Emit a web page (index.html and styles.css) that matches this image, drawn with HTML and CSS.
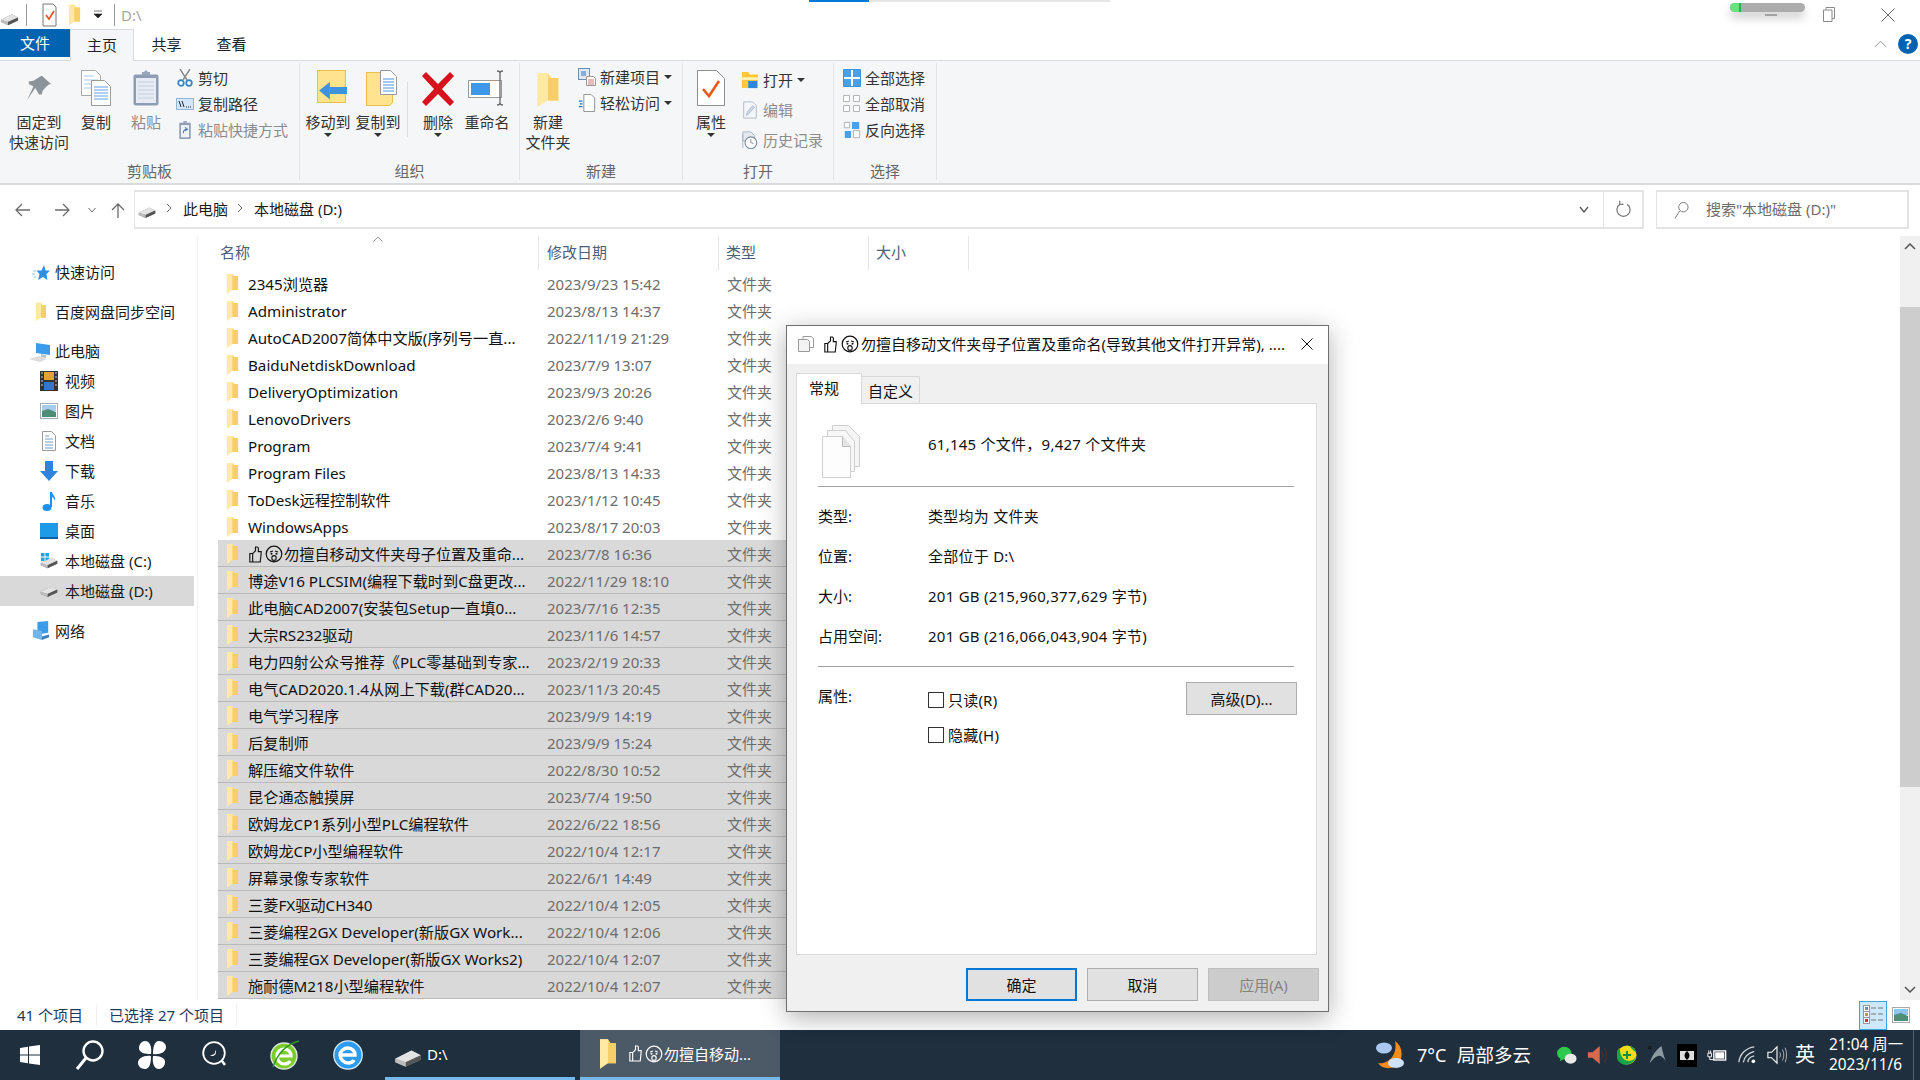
FILE: index.html
```html
<!DOCTYPE html>
<html lang="zh-CN">
<head>
<meta charset="utf-8">
<title>D:\</title>
<link rel="stylesheet" href="styles.css">
</head>
<body>
<svg class="defs" width="0" height="0">
  <defs>
    <symbol id="folder" viewBox="0 0 14 24">
      <path d="M1 1h6l2 3h4v15H5l-4 4z" fill="#fbd977"/>
      <path d="M1 1l6 0 0 18-6 4z" fill="#ffe9a3"/>
      <path d="M7 4h6v15H7z" fill="#f7cf68"/>
    </symbol>
    <symbol id="drive" viewBox="0 0 24 18">
      <path d="M1 10l14-7 8 4v4l-13 6-9-4z" fill="#8b8b8b"/>
      <path d="M1 10l14-7 8 4-13 6z" fill="#e3e3e3"/>
      <path d="M10 13l13-6v4l-13 6z" fill="#555"/>
      <path d="M1 10l9 3v4l-9-4z" fill="#bdbdbd"/>
    </symbol>
    <symbol id="thumb" viewBox="0 0 14 18">
      <path d="M1 8h3v9H1zM4 8l3-3V1h2l1 1v4h3l0 2-1 9H4" fill="none" stroke="currentColor" stroke-width="1.2"/>
    </symbol>
    <symbol id="face" viewBox="0 0 18 18">
      <circle cx="9" cy="9" r="7.8" fill="none" stroke="currentColor" stroke-width="1.2"/>
      <path d="M5 7l3-1M10 6l3 1" stroke="currentColor" stroke-width="1.1" fill="none"/>
      <circle cx="6.5" cy="8.8" r="1" fill="currentColor"/><circle cx="11.5" cy="8.8" r="1" fill="currentColor"/>
      <ellipse cx="9" cy="13" rx="2.2" ry="2.4" fill="none" stroke="currentColor" stroke-width="1.1"/>
    </symbol>
  </defs>
</svg>

<div class="window">
  <header class="titlebar">
    <svg class="qa-drive" viewBox="0 0 24 18"><use href="#drive"/></svg>
    <i class="qa-sep"></i>
    <svg class="qa-check" viewBox="0 0 15 24"><path d="M1 1h10l3 3v19H1z" fill="#fff" stroke="#777"/><path d="M4 12l3 4 5-8" fill="none" stroke="#e8501f" stroke-width="1.6"/></svg>
    <svg class="qa-folder" viewBox="0 0 14 24"><use href="#folder"/></svg>
    <svg class="qa-drop" viewBox="0 0 8 9"><path d="M0 1h8M0 4h8l-4 4z" fill="#222" stroke="#222" stroke-width=".6"/></svg>
    <i class="qa-sep qa-sep2"></i>
    <span class="qa-path">D:\</span>
    <div class="progress"><i></i></div>
    <div class="winbtns">
      <svg class="wb-min" viewBox="0 0 12 2"><path d="M0 1h12" stroke="#777"/></svg>
      <svg class="wb-max" viewBox="0 0 12 15"><path d="M3 2.5V.5h8.500v11H9M.5 3h8.500v11.500H.5z" fill="#fff" stroke="#888"/></svg>
      <svg class="wb-close" viewBox="0 0 14 14"><path d="M.5.5l13 13M13.500.5l-13 13" stroke="#666"/></svg>
    </div>
  </header>

  <nav class="tabs">
    <span class="tab-file">文件</span>
    <span class="tab tab-on">主页</span>
    <span class="tab">共享</span>
    <span class="tab">查看</span>
    <svg class="rib-caret" viewBox="0 0 14 8"><path d="M1 7l6-6 6 6" fill="none" stroke="#888"/></svg>
    <span class="help">?</span>
  </nav>

  <section class="ribbon">
    <div class="group g1">
      <div class="gbody">
        <div class="big b78">
          <div class="bigicon"><svg class="pin" width="26" height="26" viewBox="0 0 28 32" preserveAspectRatio="none"><path d="M17 1l10 10-3 1-6 7-1 5-3 0-4-8-9 15 7-17-5-3 0-3 5-1 7-5z" fill="#8d9499"/></svg></div>
          <span>固定到<br>快速访问</span>
        </div>
        <div class="big b36">
          <div class="bigicon"><svg width="30" height="36" viewBox="0 0 30 36"><path d="M.5.500h14l5 5v20H.5z" fill="#fff" stroke="#a9a9a9"/><path d="M3 6h10M3 10h14M3 14h14M3 18h14" stroke="#a9c8ec"/><path d="M10.500 10.500h13l6 6v19h-19z" fill="#fff" stroke="#9b9b9b"/><path d="M13 17h14M13 20h14M13 23h14M13 26h14M13 29h14" stroke="#5aa0e6"/></svg></div>
          <span>复制</span>
        </div>
        <div class="big b64 dim">
          <div class="bigicon"><svg width="26" height="36" viewBox="0 0 26 36"><rect x=".5" y="4.500" width="25" height="31" rx="2" fill="#8e9cb4"/><rect x="3" y="8" width="20" height="25" fill="#e6ebf4"/><path d="M5 12h16M5 16h16M5 20h16M5 24h16M5 28h16" stroke="#c5cedd"/><path d="M9 5V2h2l2-2 2 2h2v3z" fill="#9aa6bb"/></svg></div>
          <span>粘贴</span>
        </div>
        <div class="smalls s-a">
          <div class="small"><svg class="si" viewBox="0 0 16 18"><path d="M3 0l7 11M13 0L6 11" stroke="#8b8b8b" stroke-width="1.500"/><circle cx="4" cy="14" r="2.800" fill="none" stroke="#2f86c9" stroke-width="1.700"/><circle cx="12" cy="14" r="2.800" fill="none" stroke="#2f86c9" stroke-width="1.700"/></svg><span>剪切</span></div>
          <div class="small"><svg class="si" viewBox="0 0 18 14"><rect x=".5" y="1.500" width="17" height="11" fill="#d4e7f8" stroke="#8fb7dc"/><path d="M3 4l2 6M6 4l2 6" stroke="#223"/><path d="M10 10h1M12 10h1M14 10h1" stroke="#223"/></svg><span>复制路径</span></div>
          <div class="small dim"><svg class="si" viewBox="0 0 16 22"><rect x="1" y="2" width="14" height="20" rx="1" fill="#8e9cb4"/><rect x="3" y="5" width="10" height="15" fill="#eef1f6"/><path d="M6 0h4v3H6z" fill="#9aa6bb"/><path d="M6 15c0-4 2-5 4-5M8 8l3 2-3 2" fill="none" stroke="#4c7fb5" stroke-width="1.300"/></svg><span>粘贴快捷方式</span></div>
        </div>
      </div>
      <div class="glabel">剪贴板</div>
    </div>

    <div class="group g2">
      <div class="gbody">
        <div class="big b56">
          <div class="bigicon"><svg class="nudge" width="30" height="38" viewBox="0 0 28 38" preserveAspectRatio="none"><path d="M.5.500h26v32h-26z" fill="#ffe38f" stroke="#e8c14c"/><path d="M12 24V12l-10 8.500 10 9V24z" fill="#3d93dc"/><path d="M12 17h16v7H12z" fill="#3d93dc"/></svg></div>
          <span>移动到</span><i class="caret"></i>
        </div>
        <div class="big b44">
          <div class="bigicon"><svg class="nudge" width="32" height="38" viewBox="0 0 32 38"><path d="M.5 2.500h26v30l-3 3H.5z" fill="#ffe38f" stroke="#e8c14c"/><path d="M14.500.500h10l6 6v18h-16z" fill="#fff" stroke="#999"/><path d="M17 9h11M17 12h11M17 15h11M17 18h11M17 21h11" stroke="#4a94e0"/></svg></div>
          <span>复制到</span><i class="caret"></i>
        </div>
        <i class="vsep"></i>
        <div class="big b44 m-del">
          <div class="bigicon"><svg class="del" width="32" height="34" viewBox="0 0 32 34"><path d="M4 0l12 12L28 0l4 4-12 13 12 13-4 4-12-12L4 34l-4-4 12-13L0 4z" fill="#d8121c"/></svg></div>
          <span>删除</span><i class="caret"></i>
        </div>
        <div class="big b50">
          <div class="bigicon"><svg width="38" height="36" viewBox="0 0 38 36"><rect x=".5" y="10.500" width="33" height="17" fill="#fff" stroke="#9a9a9a"/><rect x="3" y="13" width="19" height="12" fill="#3c99ea"/><path d="M29 1c2 0 3 1 3 2v30c0 1-1 2-3 2M35 1c-2 0-3 1-3 2v30c0 1 1 2 3 2" fill="none" stroke="#666" stroke-width="1.300"/></svg></div>
          <span>重命名</span>
        </div>
      </div>
      <div class="glabel">组织</div>
    </div>

    <div class="group g3">
      <div class="gbody">
        <div class="big b56">
          <div class="bigicon"><svg class="del" width="24" height="36" viewBox="0 0 14 24" preserveAspectRatio="none"><use href="#folder"/></svg></div>
          <span>新建<br>文件夹</span>
        </div>
        <div class="smalls s-b">
          <div class="small"><svg class="si" viewBox="0 0 18 18"><rect x=".5" y=".5" width="11" height="11" fill="#dfe9f5" stroke="#6a8fb5"/><rect x="3" y="3" width="5" height="5" fill="#7fb0e0"/><path d="M8.500 8.500h7l2 2v7h-9z" fill="#fff" stroke="#999"/><path d="M10 12h6M10 14h6M10 16h6" stroke="#c77"/></svg><span>新建项目</span><i class="caret inl"></i></div>
          <div class="small"><svg class="si" viewBox="0 0 18 20"><path d="M5.500.5h8l4 4v15h-12z" fill="#fff" stroke="#888"/><path d="M0 8h4M1 11h3M0 14h4" stroke="#2474c2" stroke-width="1.300"/></svg><span>轻松访问</span><i class="caret inl"></i></div>
        </div>
      </div>
      <div class="glabel">新建</div>
    </div>

    <div class="group g4">
      <div class="gbody">
        <div class="big b56">
          <div class="bigicon"><svg width="28" height="36" viewBox="0 0 28 36"><path d="M.5.500h19l8 8v27H.5z" fill="#fff" stroke="#8f8f8f"/><path d="M6 19l6 7 10-15" fill="none" stroke="#e85a1c" stroke-width="2.600"/></svg></div>
          <span>属性</span><i class="caret"></i>
        </div>
        <div class="smalls s-c">
          <div class="small"><svg class="si" viewBox="0 0 18 20"><path d="M0 1h7l2 3h9v15H0z" fill="#ffc83d"/><path d="M0 7h18v3H0z" fill="#fff2b8"/><path d="M7 11h10v8H7z" fill="#2d89d8"/></svg><span>打开</span><i class="caret inl"></i></div>
          <div class="small dim"><svg class="si" viewBox="0 0 16 20"><path d="M1 1h10l4 4v14H1z" fill="#f3f6fa" stroke="#aeb8c4"/><path d="M4 16l1-4 6-7 2 2-6 7z" fill="#c8d4e2" stroke="#9fb0c4" stroke-width=".7"/></svg><span>编辑</span></div>
          <div class="small dim"><svg class="si" viewBox="0 0 18 20"><path d="M1 1h9l4 4v6H1z" fill="#e5e9f0" stroke="#a8b2c0"/><path d="M1 4v15" stroke="#a8b2c0"/><circle cx="10" cy="13" r="6.500" fill="#fff" stroke="#7f8da0" stroke-width="1.300"/><path d="M10 9v4l3 1" fill="none" stroke="#7f8da0"/></svg><span>历史记录</span></div>
        </div>
      </div>
      <div class="glabel">打开</div>
    </div>

    <div class="group g5">
      <div class="gbody">
        <div class="smalls s-d">
          <div class="small"><svg class="si" viewBox="0 0 18 18"><path d="M.5.500h17v17H.500z" fill="#fff" stroke="#3d93dc"/><path d="M1 1h7v7H1zM10 1h7v7h-7zM1 10h7v7H1zM10 10h7v7h-7z" fill="#4aa0e6"/></svg><span>全部选择</span></div>
          <div class="small"><svg class="si" viewBox="0 0 18 18"><path d="M.5.500h6v6h-6zM10.500.500h6v6h-6zM.5 10.500h6v6h-6zM10.500 10.500h6v6h-6z" fill="#fff" stroke="#b5b5b5"/></svg><span>全部取消</span></div>
          <div class="small"><svg class="si" viewBox="0 0 18 20"><path d="M.5 1.500h6v6h-6zM10.500 10.500h7v8h-7z" fill="#fff" stroke="#aaa"/><path d="M9 1h8v8H9zM1 11h7v8H1z" fill="#4aa0e6"/></svg><span>反向选择</span></div>
        </div>
      </div>
      <div class="glabel">选择</div>
    </div>
    <div class="ribfill"></div>
  </section>

  <section class="addrbar">
    <div class="navbtns">
      <svg class="nb-a" viewBox="0 0 16 14"><path d="M15 7H2M7 1L1 7l6 6" fill="none" stroke="#6b6b6b" stroke-width="1.300"/></svg>
      <svg class="nb-b" viewBox="0 0 16 14"><path d="M1 7h13M9 1l6 6-6 6" fill="none" stroke="#6b6b6b" stroke-width="1.300"/></svg>
      <svg class="nb-c" viewBox="0 0 8 6"><path d="M.5 1L4 5l3.500-4" fill="none" stroke="#6b6b6b"/></svg>
      <svg class="nb-d" viewBox="0 0 14 16"><path d="M7 16V2M1 8l6-6 6 6" fill="none" stroke="#6b6b6b" stroke-width="1.300"/></svg>
    </div>
    <div class="addr">
      <svg class="addr-drive" viewBox="0 0 24 18"><use href="#drive"/></svg>
      <svg class="chev" viewBox="0 0 6 10"><path d="M1 1l4 4-4 4" fill="none" stroke="#777"/></svg>
      <span class="crumb">此电脑</span>
      <svg class="chev chev2" viewBox="0 0 6 10"><path d="M1 1l4 4-4 4" fill="none" stroke="#777"/></svg>
      <span class="crumb">本地磁盘 (D:)</span>
      <svg class="addr-down" viewBox="0 0 10 7"><path d="M1 1l4 5 4-5" fill="none" stroke="#555" stroke-width="1.300"/></svg>
      <div class="refresh"><svg viewBox="0 0 16 20" width="15" height="20"><path d="M4 4a7 7 0 1 0 8 0M4 4V0M4 4h4" fill="none" stroke="#777" stroke-width="1.300"/></svg></div>
    </div>
    <div class="search">
      <svg viewBox="0 0 16 20" width="15" height="20"><circle cx="10" cy="7" r="5" fill="none" stroke="#777"/><path d="M6 11l-5 8" stroke="#777"/></svg>
      <span>搜索"本地磁盘 (D:)"</span>
    </div>
  </section>

  <main class="main">
    <aside class="navpane">
      <div class="ni"><svg class="ni-ic" viewBox="0 0 18 20"><path d="M12 3l1.500 5.500H18l-3.500 3.500 1 6-4.500-3-5 3 1.500-6-3-3.500h5z" fill="#2f8fe5"/><path d="M1 9h3M0 12h3M2 15h2" stroke="#8cc1f0"/></svg><span>快速访问</span></div>
      <div class="ni gap"><svg class="ni-ic" viewBox="0 0 14 24"><use href="#folder"/></svg><span>百度网盘同步空间</span></div>
      <div class="ni gap h29"><svg class="ni-ic ic-pc" viewBox="0 0 22 20"><path d="M7 1l14 2v10L7 11z" fill="#3c9be8"/><path d="M12 12l5 1v3l-5-1z" fill="#b9c3cc"/><path d="M0 17l10-3 8 3-7 3z" fill="#dcdcdc"/></svg><span>此电脑</span></div>
      <div class="ni l2"><svg class="ni-ic" viewBox="0 0 18 20"><rect width="18" height="20" fill="#333"/><rect x="4" y="1" width="10" height="8" fill="#e3a332"/><rect x="4" y="11" width="10" height="8" fill="#3377cc"/><path d="M1 2h2M1 6h2M1 10h2M1 14h2M15 2h2M15 6h2M15 10h2M15 14h2" stroke="#ccc"/></svg><span>视频</span></div>
      <div class="ni l2"><svg class="ni-ic" viewBox="0 0 18 18"><rect x=".5" y="1.500" width="17" height="15" fill="#fff" stroke="#a6adb8"/><rect x="2" y="3" width="14" height="6" fill="#a6cdea"/><path d="M2 9l6-2 8 3v5H2z" fill="#4e8e76"/></svg><span>图片</span></div>
      <div class="ni l2"><svg class="ni-ic" viewBox="0 0 16 20"><path d="M1.500.500h9l4 4v15h-13z" fill="#fff" stroke="#9a9a9a"/><path d="M4 5h4M4 8h8M4 11h8M4 14h8M4 17h8" stroke="#6e9cc9"/></svg><span>文档</span></div>
      <div class="ni l2"><svg class="ni-ic" viewBox="0 0 18 20"><path d="M5 0h8v10h5l-9 10-9-10h5z" fill="#2f83de"/></svg><span>下载</span></div>
      <div class="ni l2"><svg class="ni-ic" viewBox="0 0 14 20"><ellipse cx="5" cy="16.500" rx="4.500" ry="3.500" fill="#1f8ff0"/><path d="M8 1h2c1 4 4 4 3 9-1-3-2-4-3-4v10H8z" fill="#1f8ff0"/></svg><span>音乐</span></div>
      <div class="ni l2"><svg class="ni-ic" viewBox="0 0 18 16"><rect width="18" height="14" fill="#1e9be6"/><rect y="14" width="18" height="2" fill="#0d5fa8"/></svg><span>桌面</span></div>
      <div class="ni l2"><svg class="ni-ic" viewBox="0 0 20 20"><path d="M1 1h4v4H1zM6 1h4v4H6zM1 6h4v4H1zM6 6h4v4H6z" fill="#1aa3e8"/><use href="#drive" x="0" y="4" width="20" height="15"/></svg><span>本地磁盘 (C:)</span></div>
      <div class="ni l2 on"><svg class="ni-ic" viewBox="0 0 24 18"><use href="#drive"/></svg><span>本地磁盘 (D:)</span></div>
      <div class="ni gap"><svg class="ni-ic" viewBox="0 0 20 22"><path d="M6 1l12-1v13L6 15z" fill="#3c9be8"/><path d="M1 9l10 2v10L1 18z" fill="#6fb4ea"/><path d="M11 17l8-2v3l-8 3z" fill="#3f7fb8"/></svg><span>网络</span></div>
    </aside>

    <section class="files">
      <div class="thead">
        <span class="th th-n">名称</span><span class="th th-d">修改日期</span><span class="th th-t">类型</span><span class="th th-s">大小</span>
        <svg class="sortcaret" viewBox="0 0 10 6"><path d="M.5 5.500L5 1l4.500 4.500" fill="none" stroke="#999"/></svg>
      </div>
      <div class="rows">
        <div class="row"><span class="n"><svg class="fi"><use href="#folder"/></svg>2345浏览器</span><span class="d">2023/9/23 15:42</span><span class="d">文件夹</span></div>
        <div class="row"><span class="n"><svg class="fi"><use href="#folder"/></svg>Administrator</span><span class="d">2023/8/13 14:37</span><span class="d">文件夹</span></div>
        <div class="row"><span class="n"><svg class="fi"><use href="#folder"/></svg>AutoCAD2007简体中文版(序列号一直...</span><span class="d">2022/11/19 21:29</span><span class="d">文件夹</span></div>
        <div class="row"><span class="n"><svg class="fi"><use href="#folder"/></svg>BaiduNetdiskDownload</span><span class="d">2023/7/9 13:07</span><span class="d">文件夹</span></div>
        <div class="row"><span class="n"><svg class="fi"><use href="#folder"/></svg>DeliveryOptimization</span><span class="d">2023/9/3 20:26</span><span class="d">文件夹</span></div>
        <div class="row"><span class="n"><svg class="fi"><use href="#folder"/></svg>LenovoDrivers</span><span class="d">2023/2/6 9:40</span><span class="d">文件夹</span></div>
        <div class="row"><span class="n"><svg class="fi"><use href="#folder"/></svg>Program</span><span class="d">2023/7/4 9:41</span><span class="d">文件夹</span></div>
        <div class="row"><span class="n"><svg class="fi"><use href="#folder"/></svg>Program Files</span><span class="d">2023/8/13 14:33</span><span class="d">文件夹</span></div>
        <div class="row"><span class="n"><svg class="fi"><use href="#folder"/></svg>ToDesk远程控制软件</span><span class="d">2023/1/12 10:45</span><span class="d">文件夹</span></div>
        <div class="row"><span class="n"><svg class="fi"><use href="#folder"/></svg>WindowsApps</span><span class="d">2023/8/17 20:03</span><span class="d">文件夹</span></div>
        <div class="row sel"><span class="n"><svg class="fi"><use href="#folder"/></svg><svg class="em1"><use href="#thumb"/></svg><svg class="em2"><use href="#face"/></svg>勿擅自移动文件夹母子位置及重命...</span><span class="d">2023/7/8 16:36</span><span class="d">文件夹</span></div>
        <div class="row sel"><span class="n"><svg class="fi"><use href="#folder"/></svg>博途V16 PLCSIM(编程下载时到C盘更改...</span><span class="d">2022/11/29 18:10</span><span class="d">文件夹</span></div>
        <div class="row sel"><span class="n"><svg class="fi"><use href="#folder"/></svg>此电脑CAD2007(安装包Setup一直填0...</span><span class="d">2023/7/16 12:35</span><span class="d">文件夹</span></div>
        <div class="row sel"><span class="n"><svg class="fi"><use href="#folder"/></svg>大宗RS232驱动</span><span class="d">2023/11/6 14:57</span><span class="d">文件夹</span></div>
        <div class="row sel"><span class="n"><svg class="fi"><use href="#folder"/></svg>电力四射公众号推荐《PLC零基础到专家...</span><span class="d">2023/2/19 20:33</span><span class="d">文件夹</span></div>
        <div class="row sel"><span class="n"><svg class="fi"><use href="#folder"/></svg>电气CAD2020.1.4从网上下载(群CAD20...</span><span class="d">2023/11/3 20:45</span><span class="d">文件夹</span></div>
        <div class="row sel"><span class="n"><svg class="fi"><use href="#folder"/></svg>电气学习程序</span><span class="d">2023/9/9 14:19</span><span class="d">文件夹</span></div>
        <div class="row sel"><span class="n"><svg class="fi"><use href="#folder"/></svg>后复制师</span><span class="d">2023/9/9 15:24</span><span class="d">文件夹</span></div>
        <div class="row sel"><span class="n"><svg class="fi"><use href="#folder"/></svg>解压缩文件软件</span><span class="d">2022/8/30 10:52</span><span class="d">文件夹</span></div>
        <div class="row sel"><span class="n"><svg class="fi"><use href="#folder"/></svg>昆仑通态触摸屏</span><span class="d">2023/7/4 19:50</span><span class="d">文件夹</span></div>
        <div class="row sel"><span class="n"><svg class="fi"><use href="#folder"/></svg>欧姆龙CP1系列小型PLC编程软件</span><span class="d">2022/6/22 18:56</span><span class="d">文件夹</span></div>
        <div class="row sel"><span class="n"><svg class="fi"><use href="#folder"/></svg>欧姆龙CP小型编程软件</span><span class="d">2022/10/4 12:17</span><span class="d">文件夹</span></div>
        <div class="row sel"><span class="n"><svg class="fi"><use href="#folder"/></svg>屏幕录像专家软件</span><span class="d">2022/6/1 14:49</span><span class="d">文件夹</span></div>
        <div class="row sel"><span class="n"><svg class="fi"><use href="#folder"/></svg>三菱FX驱动CH340</span><span class="d">2022/10/4 12:05</span><span class="d">文件夹</span></div>
        <div class="row sel"><span class="n"><svg class="fi"><use href="#folder"/></svg>三菱编程2GX Developer(新版GX Work...</span><span class="d">2022/10/4 12:06</span><span class="d">文件夹</span></div>
        <div class="row sel"><span class="n"><svg class="fi"><use href="#folder"/></svg>三菱编程GX Developer(新版GX Works2)</span><span class="d">2022/10/4 12:07</span><span class="d">文件夹</span></div>
        <div class="row sel"><span class="n"><svg class="fi"><use href="#folder"/></svg>施耐德M218小型编程软件</span><span class="d">2022/10/4 12:07</span><span class="d">文件夹</span></div>
      </div>
    </section>

    <div class="scrollbar">
      <svg class="sb-arrow" viewBox="0 0 12 7"><path d="M1 6l5-5 5 5" fill="none" stroke="#555" stroke-width="1.500"/></svg>
      <div class="sb-track"><div class="sb-thumb"></div></div>
      <svg class="sb-arrow" viewBox="0 0 12 7"><path d="M1 1l5 5 5-5" fill="none" stroke="#555" stroke-width="1.500"/></svg>
    </div>
  </main>

  <footer class="status">
    <span class="st st1">41 个项目</span>
    <span class="st st2">已选择 27 个项目</span>
    <div class="views">
      <div class="view on"><svg width="20" height="20" viewBox="0 0 20 20"><rect x=".5" y=".5" width="6" height="6" fill="#fff" stroke="#999"/><rect x=".5" y="6.500" width="6" height="6" fill="#fff" stroke="#999"/><rect x=".5" y="12.500" width="6" height="6" fill="#fff" stroke="#999"/><rect x="2" y="2" width="3" height="3" fill="#6a8fb5"/><rect x="2" y="8" width="3" height="3" fill="#c09a2c"/><rect x="2" y="14" width="3" height="3" fill="#c33"/><path d="M8 3h5M15 3h5M8 9h5M15 9h5M8 15h5M15 15h5" stroke="#777"/></svg></div>
      <div class="view"><svg width="18" height="16" viewBox="0 0 18 16"><rect x=".5" y=".5" width="17" height="15" fill="#fff" stroke="#aaa"/><rect x="2" y="2" width="14" height="6" fill="#8fc4ee"/><path d="M2 8l7-2 7 3v5H2z" fill="#4e8e76"/></svg></div>
    </div>
  </footer>
</div>

<footer class="taskbar">
  <div class="tslot"><svg width="20" height="20" viewBox="0 0 20 20"><path d="M0 3l8-1.200v7.700H0zM9 1.600L20 0v9.500H9zM0 10.500h8v7.700L0 17zM9 10.500h11V20L9 18.400z" fill="#fff"/></svg></div>
  <div class="tslot"><svg width="30" height="32" viewBox="0 0 30 32"><circle cx="18" cy="12" r="9.500" fill="none" stroke="#fff" stroke-width="2.400"/><path d="M11 19L2 30" stroke="#fff" stroke-width="3"/></svg></div>
  <div class="tslot"><svg width="28" height="28" viewBox="0 0 28 28"><g fill="#fff"><path id="petal" d="M13 13C7 13 1 12 1 7c0-4 3-7 6-7 5 0 7 6 6 13z"/><path d="M15 13c0-6 1-13 6-13 4 0 7 3 7 6 0 5-6 8-13 7z"/><path d="M15 15c6 0 12 1 12 6 0 4-3 7-6 7-5 0-7-6-6-13z"/><path d="M13 15c0 6-1 13-6 13-4 0-7-3-7-6 0-5 6-8 13-7z"/></g></svg></div>
  <div class="tslot"><svg width="26" height="28" viewBox="0 0 26 28"><circle cx="12" cy="12" r="10.800" fill="none" stroke="#fff" stroke-width="1.800"/><path d="M8 14c2 2 6 1 6-3 0-1-.5-2-1-2 1 3-1 5-5 5z" fill="#fff"/><path d="M20 20l3 4" stroke="#fff" stroke-width="2.500"/></svg></div>
  <div class="tslot"><svg width="30" height="34" viewBox="0 0 30 34"><circle cx="14" cy="18" r="13" fill="#7ccc2c" stroke="#dfe8d8" stroke-width="1.400"/><path d="M7 18h14c0-4-3-7-7-7s-7 3-7 7 3 8 7 8c3 0 5-1 6-3" fill="none" stroke="#fff" stroke-width="3.200"/><path d="M3 29C8 14 18 6 29 3" fill="none" stroke="#2f9a22" stroke-width="1.400"/></svg></div>
  <div class="tslot"><svg width="30" height="30" viewBox="0 0 30 30"><circle cx="15" cy="15" r="14.200" fill="#2d9bf0" stroke="#d9edfb" stroke-width="1.300"/><path d="M7 15h15c0-4-3-7-7-7s-8 3-8 7 4 8 8 8c3 0 5-1 6-3" fill="none" stroke="#fff" stroke-width="3.400"/></svg></div>
  <div class="tapp tapp-d"><svg class="tapp-drive" viewBox="0 0 24 18"><use href="#drive"/></svg><span class="tapp-dt">D:\</span></div>
  <div class="tapp tapp-on"><svg class="tapp-folder" viewBox="0 0 14 24"><use href="#folder"/></svg><svg class="em1 w"><use href="#thumb"/></svg><svg class="em2 w"><use href="#face"/></svg><span>勿擅自移动...</span></div>
  <div class="tray">
    <svg class="wx" viewBox="0 0 30 32"><path d="M20 2c8 5 9 18 2 24-6 5-15 4-19-2 10 2 20-8 17-22z" fill="#f28c1c"/><ellipse cx="9" cy="9" rx="8" ry="5.500" fill="#a9c8ef"/><ellipse cx="21" cy="24" rx="8" ry="5" fill="#cfe0f7"/></svg>
    <span class="wtemp">7°C</span>
    <span class="wtext">局部多云</span>
    <div class="ticons">
      <svg viewBox="0 0 22 22"><ellipse cx="8" cy="9" rx="8" ry="7" fill="#2dc84d"/><path d="M4 14l-1 4 5-3z" fill="#2dc84d"/><ellipse cx="15" cy="15" rx="6.500" ry="5.500" fill="#e8e8e8"/></svg>
      <svg viewBox="0 0 22 22"><path d="M1 8h5l8-7v20l-8-7H1z" fill="#d9694b"/><path d="M16 6c2 3 2 7 0 10M19 3c3 5 3 11 0 16" fill="none" stroke="#5b2f2a"/></svg>
      <svg viewBox="0 0 22 22"><circle cx="11" cy="11" r="10.500" fill="#f5dc1a"/><path d="M3 3a10.500 10.500 0 0 0 8 18.500 10.500 10.500 0 0 0 10-9C19 18 12 19 7 15 4 12 3 7 3 3zM14 1a10.500 10.500 0 0 1 7 7C18 6 16 4 14 1z" fill="#17a34a"/><path d="M11 6.500v9M6.500 11h9" stroke="#0c8a3e" stroke-width="2"/></svg>
      <svg viewBox="0 0 22 22"><path d="M3 20C5 12 10 5 16 1c1 6 3 13 5 17-3-5-7-7-9-6-3 1-6 4-9 8z" fill="#8a9aa0"/><path d="M1 1l4 4M5 1L1 5" stroke="#111"/></svg>
      <svg class="dolby" viewBox="0 0 20 23"><rect width="20" height="23" fill="#000"/><path d="M3 7h5a4.500 4.500 0 0 1 0 9H3zM17 7h-5a4.500 4.500 0 0 0 0 9h5z" fill="#ddd"/></svg>
      <svg viewBox="0 0 22 22"><rect x="7.500" y="6.500" width="13" height="10" fill="none" stroke="#fff" stroke-width="1.500"/><rect x="9" y="8" width="10" height="7" fill="#fff"/><path d="M1 9h4v4H1zM2 6v3M4 6v3M3 13v3h5" stroke="#fff" fill="none"/></svg>
      <svg class="wifi" viewBox="0 0 22 22"><path d="M2 19C3 10 10 3 19 2M7 19c1-6 5-10 12-12M12 19c0-3 2-6 7-7" fill="none" stroke="#cfd4d9" stroke-width="1.400"/><circle cx="18" cy="18" r="2" fill="#fff"/></svg>
      <svg viewBox="0 0 22 22"><path d="M1 8h4l6-6v18l-6-6H1z" fill="none" stroke="#fff" stroke-width="1.200"/><path d="M14 8c1 2 1 4 0 6M17 5c2 4 2 8 0 12M20 3c2 5 2 11 0 16" fill="none" stroke="#bbb"/></svg>
    </div>
    <span class="ime">英</span>
    <div class="clock"><span>21:04 周一</span><span>2023/11/6</span></div>
    <i class="showdesk"></i>
  </div>
</footer>

<div class="pill"><i></i></div>

<div class="dialog">
  <div class="dlg-title">
    <svg class="dlg-ic" viewBox="0 0 16 16"><path d="M5 .5h8l2.500 2v9H5z" fill="#fff" stroke="#999"/><path d="M.5 3.500h9l2 2v10h-11z" fill="#f3f3f3" stroke="#999"/></svg>
    <svg class="em1 t"><use href="#thumb"/></svg><svg class="em2 t"><use href="#face"/></svg>
    <span class="dlg-tt">勿擅自移动文件夹母子位置及重命名(导致其他文件打开异常), ....</span>
    <svg class="dlg-x" viewBox="0 0 12 12"><path d="M.5.500l11 11M11.500.500l-11 11" stroke="#111"/></svg>
  </div>
  <div class="dlg-body">
    <div class="dlg-tabs"><span class="dt dt-on">常规</span><span class="dt">自定义</span></div>
    <div class="panel">
      <div class="p-head">
        <svg class="p-icon" viewBox="0 0 38 54"><path d="M10.500.500h16l11 11v30h-27z" fill="#f5f5f5" stroke="#cfcfcf"/><path d="M5.500 5.500h18l9 11v30h-27z" fill="#f7f7f7" stroke="#cfcfcf"/><path d="M.5 11.500h20l8 10v31h-28z" fill="#fdfdfd" stroke="#cfcfcf"/><path d="M20.500 11.500v10h8" fill="#e6e6e6" stroke="#bbb"/></svg>
        <span>61,145 个文件，9,427 个文件夹</span>
      </div>
      <div class="hr"></div>
      <dl class="props">
        <dt>类型:</dt><dd>类型均为 文件夹</dd>
        <dt>位置:</dt><dd>全部位于 D:\</dd>
        <dt>大小:</dt><dd>201 GB (215,960,377,629 字节)</dd>
        <dt>占用空间:</dt><dd>201 GB (216,066,043,904 字节)</dd>
      </dl>
      <div class="hr"></div>
      <div class="attrs">
        <span class="attr-l">属性:</span>
        <div class="checks">
          <label class="chk"><i></i>只读(R)</label>
          <label class="chk"><i></i>隐藏(H)</label>
        </div>
        <span class="btn adv">高级(D)...</span>
      </div>
    </div>
    <div class="dlg-btns">
      <span class="btn focus">确定</span>
      <span class="btn">取消</span>
      <span class="btn off">应用(A)</span>
    </div>
  </div>
</div>
</body>
</html>
```

FILE: styles.css
```css
* { box-sizing: border-box; }
html, body { margin: 0; padding: 0; }
body {
  width: 1920px; height: 1080px; overflow: hidden; position: relative;
  background: #fff; color: #1a1a1a;
  font: 15px/20px "Noto Sans", "Noto Sans CJK SC", sans-serif;
}
i { display: block; font-style: normal; }
.defs { position: absolute; }
.window { height: 1030px; display: flex; flex-direction: column; }

/* title bar */
.titlebar { height: 29px; flex: none; display: flex; align-items: center; position: relative; }
.qa-drive { width: 19px; height: 14px; margin-top: 8px; }
.qa-sep { width: 1px; height: 22px; background: #999; margin-left: 7px; margin-top: 1px; }
.qa-check { width: 15px; height: 24px; margin-left: 15px; }
.qa-folder { width: 13px; height: 24px; margin-left: 11px; }
.qa-drop { width: 8px; height: 9px; margin-left: 13px; }
.qa-sep2 { margin-left: 12px; }
.qa-path { margin-left: 6px; color: #a6a6a6; font-size: 15px; }
.progress { position: absolute; left: 809px; top: 0; width: 301px; height: 2px; background: #e6e6e6; }
.progress i { width: 60px; height: 2px; background: #0078d7; }
.winbtns { margin-left: auto; display: flex; align-items: center; padding-right: 25px; }
.wb-min { width: 12px; height: 2px; margin-right: 46px; }
.wb-max { width: 12px; height: 15px; margin-right: 46px; }
.wb-close { width: 14px; height: 14px; }

/* tabs */
.tabs { height: 32px; flex: none; display: flex; align-items: flex-start; border-bottom: 1px solid #dadbdc; position: relative; }
.tab-file { width: 70px; height: 28px; background: #0063b1; color: #fff; text-align: center; line-height: 28px; }
.tab { width: 65px; height: 31px; text-align: center; line-height: 30px; color: #222; }
.tab-on { width: 64px; height: 32px; background: #f5f6f7; border: 1px solid #dadbdc; border-bottom: 0; border-top-color: #dadbdc; }
.rib-caret { width: 13px; height: 8px; margin-left: auto; margin-right: 11px; margin-top: 11px; }
.help { width: 20px; height: 20px; border-radius: 50%; background: #0063b1; color: #fff; font-size: 14px; font-weight: 700; line-height: 20px; text-align: center; margin-top: 5px; margin-right: 2px; }

/* ribbon */
.ribbon { height: 124px; flex: none; display: flex; background: #f5f6f7; border-bottom: 2px solid #dadbdc; }
.group { display: flex; flex-direction: column; flex: none; margin-bottom: 3px; margin-top: 2px; border-right: 1px solid #e1e3e6; }
.g1 { width: 300px; } .g2 { width: 220px; } .g3 { width: 163px; } .g4 { width: 151px; } .g5 { width: 103px; }
.ribfill { flex: 1; }
.gbody { flex: 1; display: flex; align-items: flex-start; min-height: 0; }
.glabel { height: 22px; line-height: 20px; text-align: center; color: #666; margin-bottom: -3px; }
.big { display: flex; flex-direction: column; align-items: center; flex: none; line-height: 20px; text-align: center; white-space: nowrap; color: #333; }
.bigicon { height: 49px; padding-top: 7px; display: flex; align-items: flex-start; justify-content: center; }
.pin { margin-top: 5px; }
.del { margin-top: 2px; }
.nudge { margin-left: 8px; }
.b78 { width: 78px; } .b36 { width: 36px; } .b64 { width: 64px; } .b56 { width: 56px; } .b44 { width: 44px; } .b50 { width: 50px; }
.m-del { margin-left: 8px; margin-right: 2px; }
.dim { color: #8c8c8c; }
.caret { width: 0; height: 0; border: 4px solid transparent; border-top-color: #333; border-bottom: 0; margin-top: 1px; }
.caret.inl { margin: 0 0 0 4px; align-self: center; }
.vsep { width: 1px; height: 55px; background: #dcdee1; margin-top: 19px; margin-left: 7px; flex: none; }
.smalls { display: flex; flex-direction: column; margin-top: 2px; }
.small { display: flex; align-items: center; height: 26px; white-space: nowrap; color: #333; }
.small .si { width: 18px; height: 18px; margin-right: 4px; flex: none; }
.small.dim { color: #8c8c8c; }
.s-a { margin-left: -2px; }
.s-b { margin-left: 2px; margin-top: 1px; }
.s-c { margin-left: 2px; }
.s-c .small { height: 30px; }
.s-d { margin-left: 9px; }

/* address */
.addrbar { height: 51px; flex: none; display: flex; align-items: flex-start; padding-top: 5px; }
.navbtns { width: 134px; height: 39px; display: flex; align-items: center; flex: none; }
.nb-a { width: 16px; height: 14px; margin-left: 15px; }
.nb-b { width: 16px; height: 14px; margin-left: 23px; }
.nb-c { width: 8px; height: 6px; margin-left: 18px; }
.nb-d { width: 14px; height: 16px; margin-left: 15px; }
.addr { width: 1510px; height: 39px; border: 2px solid #e3e3e3; border-left-width: 1px; display: flex; align-items: center; color: #1a1a1a; }
.crumb { margin-top: -2px; }
.addr-drive { width: 18px; height: 14px; margin-left: 3px; margin-top: 4px; }
.chev { width: 6px; height: 10px; margin-left: 10px; margin-right: 11px; margin-top: -3px; }
.chev2 { margin-left: 9px; margin-right: 11px; }
.addr-down { width: 10px; height: 7px; margin-left: auto; margin-right: 14px; }
.refresh { width: 39px; height: 100%; border-left: 1px solid #e3e3e3; display: flex; align-items: center; justify-content: center; }
.search { width: 253px; height: 39px; margin-left: 12px; border: 2px solid #e3e3e3; border-left-width: 1px; display: flex; align-items: center; padding-left: 17px; color: #6d6d6d; }
.search span { margin-left: 17px; margin-top: -2px; }

/* main */
.main { flex: 1; display: flex; min-height: 0; }
.navpane { width: 198px; flex: none; padding: 21px 3px 0 0; border-right: 1px solid #f0f0f0; }
.ni { height: 30px; display: flex; align-items: center; padding-left: 32px; white-space: nowrap; color: #1a1a1a; }
.ni span { margin-top: -1px; }
.ni .ni-ic { width: 18px; height: 20px; margin-right: 5px; flex: none; }
.ni .ic-pc { width: 22px; margin-left: -3px; margin-right: 4px; }
.ni.l2 { padding-left: 40px; }
.ni.l2 .ni-ic { margin-right: 7px; }
.ni.gap { margin-top: 10px; }
.ni.h29 { height: 29px; }
.ni.on { background: #d9d9d9; }
.files { flex: 1; min-width: 0; padding-left: 20px; position: relative; }
.thead { height: 34px; display: flex; position: relative; color: #4c607a; }
.th { display: flex; align-items: center; height: 34px; border-right: 1px solid #e5e5e5; padding-bottom: 2px; }
.th-n { width: 321px; padding-left: 2px; }
.th-d { width: 180px; padding-left: 8px; }
.th-t { width: 150px; padding-left: 7px; }
.th-s { width: 100px; padding-left: 7px; }
.sortcaret { position: absolute; left: 155px; top: 0; width: 10px; height: 6px; }
.row { width: 750px; height: 27px; display: grid; grid-template-columns: 321px 180px 1fr; align-items: center; border-bottom: 1px solid transparent; padding-top: 2px; }
.row.sel { background: #d9d9d9; border-bottom-color: #b9b9b9; }
.n { display: flex; align-items: center; white-space: nowrap; overflow: hidden; padding-left: 8px; color: #111; font-size: 15.2px; }
.fi { width: 13px; height: 23px; margin-right: 9px; flex: none; margin-top: -2px; }
.em1 { width: 15px; height: 17px; margin-right: 2px; flex: none; color: #111; }
.em2 { width: 18px; height: 18px; margin-right: 1px; flex: none; color: #111; }
.em1.w, .em2.w { color: #fff; }
.d { color: #6d6d6d; padding-left: 8px; white-space: nowrap; }
.scrollbar { width: 20px; flex: none; background: #f0f0f0; display: flex; flex-direction: column; align-items: center; }
.sb-arrow { width: 12px; height: 7px; margin: 7px 0; flex: none; }
.sb-track { flex: 1; min-height: 0; width: 100%; padding-top: 50px; }
.sb-thumb { height: 480px; background: #cdcdcd; }

/* status */
.status { height: 30px; flex: none; display: flex; align-items: center; color: #1e395b; position: relative; }
.st { height: 22px; line-height: 22px; border-right: 1px solid #f0f0f0; }
.st1 { padding-left: 17px; width: 97px; }
.st2 { padding-left: 12px; width: 140px; }
.views { margin-left: auto; display: flex; align-items: center; height: 30px; padding-right: 8px; }
.view { width: 28px; height: 29px; display: flex; align-items: center; justify-content: center; }
.view.on { background: #cde8f8; border: 1px solid #3ba5e0; margin-right: 2px; }
.view:last-child { width: 23px; }

/* taskbar */
.taskbar { height: 50px; background: #1f2f3e; color: #fff; display: flex; align-items: center; }
.tslot { width: 60px; height: 50px; display: flex; align-items: center; justify-content: center; flex: none; }
.tslot:nth-child(3) { width: 63px; }
.tslot:nth-child(4) { width: 64px; }
.tslot:nth-child(5) { width: 76px; }
.tslot:nth-child(6) { width: 50px; }
.tapp { height: 50px; flex: none; display: flex; align-items: center; border-bottom: 3px solid #76b9ed; font-size: 15px; }
.tapp-d { width: 190px; margin-left: 12px; padding-left: 9px; }
.tapp-drive { width: 28px; height: 21px; margin-top: 8px; }
.tapp-dt { margin-left: 5px; margin-top: 0; font-size: 15px; }
.tapp-on { width: 200px; margin-left: 5px; padding-left: 18px; background: #4c5a67; }
.tapp-folder { width: 20px; height: 32px; margin-right: 10px; }
.tapp-on span { white-space: nowrap; }
.tray { margin-left: auto; display: flex; align-items: center; height: 50px; position: relative; }
.wx { width: 30px; height: 32px; }
.wtemp { font-size: 18px; margin-left: 12px; width: 40px; white-space: nowrap; }
.wtext { font-size: 18.5px; width: 100px; white-space: nowrap; }
.ticons { display: flex; gap: 10px; align-items: center; }
.ticons svg { width: 20px; height: 20px; }
.ticons .dolby { height: 23px; }
.ime { font-size: 20px; margin-left: 8px; width: 34px; }
.clock { display: flex; flex-direction: column; width: 84px; line-height: 20px; font-size: 15.4px; white-space: nowrap; }
.showdesk { width: 1px; height: 50px; background: #55616d; margin-left: 0; margin-right: 6px; }

.pill { position: absolute; left: 1730px; top: 3px; width: 75px; height: 9px; border-radius: 5px; background: #acacac; box-shadow: 0 6px 10px rgba(0,0,0,.2); overflow: hidden; }
.pill i { width: 11px; height: 9px; background: #6be37c; border-right: 2px solid #2fae4a; }

/* dialog */
.dialog { position: absolute; left: 786px; top: 325px; width: 543px; height: 687px; background: #f0f0f0; border: 1px solid #6f6f6f; box-shadow: 0 6px 24px rgba(0,0,0,.3); display: flex; flex-direction: column; }
.dlg-title { height: 38px; flex: none; background: #fff; display: flex; align-items: center; padding: 0 0 2px 11px; color: #111; white-space: nowrap; }
.dlg-ic { width: 16px; height: 16px; margin-right: 9px; flex: none; }
.em1.t { margin-right: 3px; }
.em2.t { margin-right: 2px; }
.dlg-tt { flex: 1; font-size: 15px; letter-spacing: .03px; }
.dlg-x { width: 12px; height: 12px; margin-right: 15px; }
.dlg-body { flex: 1; display: flex; flex-direction: column; padding: 9px 11px 0 9px; color: #111; }
.dlg-tabs { display: flex; height: 30px; align-items: flex-end; position: relative; z-index: 1; }
.dt { width: 58px; height: 27px; background: #f0f0f0; border: 1px solid #d9d9d9; border-left: 0; border-bottom: 0; text-align: center; line-height: 29px; color: #111; }
.dt-on { width: 66px; height: 31px; background: #fff; border-left: 1px solid #d9d9d9; line-height: 28px; margin-bottom: -1px; padding-right: 10px; }
.panel { width: 521px; height: 552px; background: #fff; border: 1px solid #d9d9d9; padding: 0 22px 0 21px; flex: none; }
.p-head { height: 82px; display: flex; align-items: flex-start; }
.p-icon { width: 38px; height: 54px; margin: 21px 0 0 4px; flex: none; }
.p-head span { margin: 30px 0 0 68px; white-space: nowrap; letter-spacing: .25px; }
.hr { height: 1px; background: #a0a0a0; }
.props { display: grid; grid-template-columns: 110px 1fr; grid-auto-rows: 40px; margin: 9px 0 10px; align-items: center; }
.props dt, .props dd { margin: 0; white-space: nowrap; }
.props dd { letter-spacing: .25px; }
.attrs { display: flex; align-items: flex-start; position: relative; }
.attr-l { width: 110px; margin-top: 19px; }
.checks { display: flex; flex-direction: column; margin-top: 23px; gap: 15px; }
.chk { display: flex; align-items: center; height: 20px; letter-spacing: .2px; }
.chk i { width: 16px; height: 16px; background: #fff; border: 1px solid #333; margin-right: 4px; }
.btn { width: 111px; height: 33px; background: #e1e1e1; border: 1px solid #adadad; display: flex; align-items: center; justify-content: center; color: #111; flex: none; }
.adv { margin-left: auto; margin-right: -3px; margin-top: 15px; }
.dlg-btns { display: flex; justify-content: flex-end; gap: 10px; margin-top: 13px; margin-right: -2px; }
.btn.focus { border: 2px solid #0078d7; }
.btn.off { background: #cccccc; color: #838383; border-color: #bfbfbf; }
```
